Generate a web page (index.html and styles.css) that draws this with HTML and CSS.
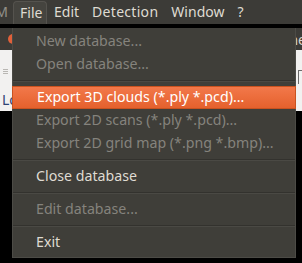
FILE: index.html
```html
<html>
<head>
<title>File menu</title>
<link rel="stylesheet" href="styles.css">
</head>
<body>
<div class="screen">
    <div class="menubar">
        <div class="cut"><span>M</span></div>
        <div class="item open">File</div>
        <div class="item">Edit</div>
        <div class="item">Detection</div>
        <div class="item">Window</div>
        <div class="item">?</div>
    </div>
    <div class="shadow"></div>
    <div class="window">
        <div class="toolbar">
            <span class="dot"></span>
            <span class="frag">ne</span>
        </div>
        <div class="panel">
            <div class="side">
                <span class="grip"></span>
                <span class="label">Lo</span>
            </div>
            <span class="bracket"></span>
        </div>
    </div>

    <div class="menu">
        <div class="row off">New database...</div>
        <div class="row off">Open database...</div>
        <div class="sep"></div>
        <div class="row hot">Export 3D clouds (*.ply *.pcd)...</div>
        <div class="row off">Export 2D scans (*.ply *.pcd)...</div>
        <div class="row off">Export 2D grid map (*.png *.bmp)...</div>
        <div class="sep"></div>
        <div class="row">Close database</div>
        <div class="sep"></div>
        <div class="row off">Edit database...</div>
        <div class="sep"></div>
        <div class="row">Exit</div>
    </div>
</div>
</body>
</html>
```

FILE: styles.css
```css
html, body {
    margin: 0;
    height: 100%;
    background: #000;
}
* {
    font-family: "Noto Sans", "DejaVu Sans", sans-serif;
    box-sizing: border-box;
}
.screen {
    position: relative;
    width: 302px;
    height: 263px;
    overflow: hidden;
    background: #000;
}

/* top menu bar */
.menubar {
    display: flex;
    height: 24px;
    background: #3c3b37;
    color: #dfdbd2;
    font-size: 14px;
    line-height: 23px;
}
.cut {
    width: 13px;
    padding-right: 5px;
    display: flex;
    justify-content: flex-end;
    overflow: hidden;
    color: #928f88;
}
.item {
    padding: 0 6px;
    margin-right: 1px;
}
.item:nth-child(4) {
    letter-spacing: 0.3px;
}
.item.open {
    padding: 0 5px 0 6px;
    width: 34px;
    margin-top: 1px;
    line-height: 21px;
    background: #45443f;
    border: 1px solid #55534e;
    border-bottom: none;
    border-radius: 4px 4px 0 0;
}
.shadow {
    height: 4px;
    background: #000;
}

/* window behind the menu */
.toolbar {
    display: flex;
    justify-content: space-between;
    align-items: center;
    height: 22px;
    background: #3c3b37;
}
.dot {
    width: 10px;
    height: 10px;
    margin-left: 8px;
    border-radius: 50%;
    background: #e0603a;
}
.frag {
    color: #d8d4cc;
    font-size: 14px;
    margin-right: -4px;
}
.panel {
    display: flex;
    justify-content: space-between;
    height: 61px;
    background: #f2f1f0;
}
.side {
    display: flex;
    flex-direction: column;
    padding: 19px 0 0 3px;
}
.grip {
    width: 5px;
    height: 6px;
    background: repeating-linear-gradient(#b9b7b3 0 1px, transparent 1px 2px);
}
.label {
    margin-top: 17px;
    margin-left: -1px;
    color: #2f4374;
    font-size: 14px;
    line-height: 16px;
}
.bracket {
    width: 4px;
    height: 14px;
    margin-top: 20px;
    border-left: 1px solid #6a6a6a;
    border-top: 1px solid #6a6a6a;
}

/* dropdown */
.menu {
    position: absolute;
    left: 12px;
    top: 28px;
    width: 284px;
    height: 230px;
    padding-top: 2px;
    background: #3f3e39;
    border: 1px solid #4c4b46;
    border-top: none;
    color: #dfdbd2;
    font-size: 14.2px;
}
.row {
    height: 23px;
    line-height: 22px;
    padding-left: 23px;
    white-space: nowrap;
}
.row.off {
    color: #85837d;
}
.row.hot {
    margin: 0 -1px;
    padding-left: 24px;
    color: #ffffff;
    background: linear-gradient(#f2784a, #e5612d);
    border: 1px solid #c9521f;
    line-height: 20px;
}
.sep {
    height: 10px;
    padding-top: 4px;
}
.sep::before {
    content: "";
    display: block;
    height: 1px;
    background: #33322e;
    border-bottom: 1px solid #4a4944;
}
```
